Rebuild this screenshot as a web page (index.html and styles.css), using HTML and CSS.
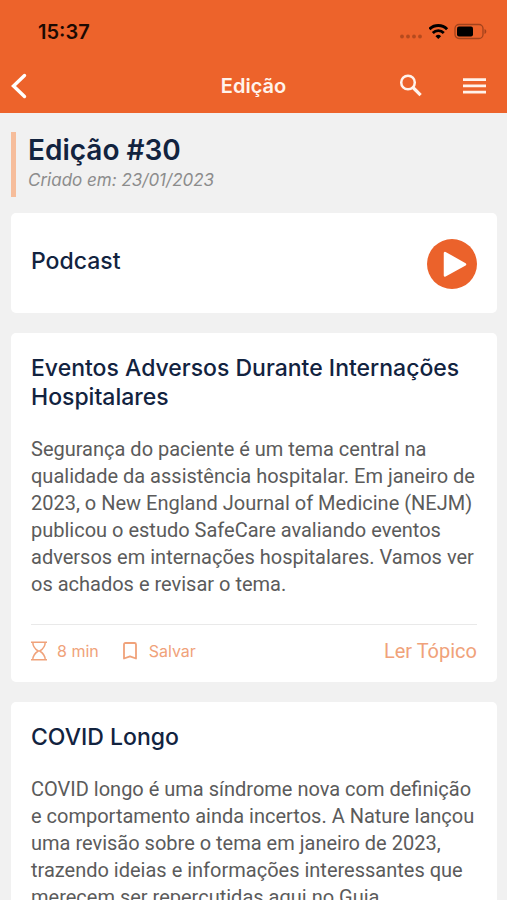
FILE: index.html
```html
<!DOCTYPE html>
<html lang="pt-BR">
<head>
<meta charset="utf-8">
<meta name="viewport" content="width=device-width, initial-scale=1">
<title>Edição</title>
<link rel="stylesheet" href="styles.css">
</head>
<body>
<header class="header">
  <div class="status">
    <span class="time">15:37</span>
    <div class="indicators">
      <svg class="signal" width="24" height="20" viewBox="0 0 24 20" fill="#b54a1e" aria-hidden="true"><circle cx="2" cy="14.500" r="1.900"/><circle cx="8" cy="14.500" r="1.900"/><circle cx="14" cy="14.500" r="1.900"/><circle cx="20" cy="14.500" r="1.900"/></svg>
      <svg width="20" height="20" viewBox="0 0 20 20" fill="none" stroke="#000" aria-hidden="true"><path d="M0.500 7.200a12.600 12.600 0 0 1 17.600 0" stroke-width="3"/><path d="M3.800 10.900a7.900 7.900 0 0 1 11 0" stroke-width="2.800"/><path d="M9.300 17l-2.800-2.800a4 4 0 0 1 5.600 0z" fill="#000" stroke="none"/></svg>
      <svg width="34" height="20" viewBox="0 0 34 20" aria-hidden="true"><rect x="1" y="2.500" width="28" height="14" rx="4" fill="none" stroke="#a3431c" stroke-width="1.300"/><rect x="3" y="4.500" width="16" height="10" rx="2" fill="#000"/><path d="M30.500 7c2.400 1 2.400 4 0 5z" fill="#a3431c"/></svg>
    </div>
  </div>
  <nav class="nav">
    <button class="icon-button" type="button" aria-label="Voltar"><svg width="18" height="28" viewBox="0 0 18 28" fill="none" stroke="#fff" stroke-width="3.400" stroke-linecap="round" stroke-linejoin="miter"><path d="M14.500 3.500L3.500 14l11 10.500"/></svg></button>
    <h1 class="nav-title">Edição</h1>
    <div class="nav-actions">
      <button class="icon-button" type="button" aria-label="Buscar"><svg width="24" height="24" viewBox="0 0 24 24" fill="none" stroke="#fff3ec"><circle cx="9" cy="8.500" r="6.800" stroke-width="2.500"/><path d="M14 13.500l7.600 7.600" stroke-width="3.200"/></svg></button>
      <button class="icon-button" type="button" aria-label="Menu"><svg width="24" height="24" viewBox="0 0 24 24" fill="#fff3ec"><path d="M0 4.200h23v2.700H0zM0 10.500h23v2.700H0zM0 16.800h23v2.700H0z"/></svg></button>
    </div>
  </nav>
</header>
<main class="content">
  <div class="edition">
    <h2 class="edition-title">Edição #30</h2>
    <p class="edition-date">Criado em: 23/01/2023</p>
  </div>
  <section class="card podcast">
    <h3 class="card-title">Podcast</h3>
    <button class="icon-button" type="button" aria-label="Reproduzir"><svg width="50" height="50" viewBox="0 0 50 50"><circle cx="25" cy="25" r="25" fill="#eb622b"/><path d="M18 14v22.500L38 25.300z" fill="#fff" stroke="#fff" stroke-width="2.500" stroke-linejoin="round"/></svg></button>
  </section>
  <article class="card">
    <h3 class="card-title">Eventos Adversos Durante Internações Hospitalares</h3>
    <p class="card-text">Segurança do paciente é um tema central na qualidade da assistência hospitalar. Em janeiro de 2023, o New England Journal of Medicine (NEJM) publicou o estudo SafeCare avaliando eventos adversos em internações hospitalares. Vamos ver os achados e revisar o tema.</p>
    <footer class="card-footer">
      <span class="meta"><svg width="16" height="20" viewBox="0 0 16 20" fill="none" stroke="currentColor" stroke-width="1.500" aria-hidden="true"><path d="M0 1.200h16M0 18.800h16M1.800 1.200c0 4.800 2 6.600 5.400 8.800-3.400 2.200-5.400 4-5.400 8.800M14.200 1.200c0 4.800-2 6.600-5.400 8.800 3.400 2.200 5.400 4 5.400 8.800"/></svg>8 min</span>
      <button class="meta save" type="button"><svg width="14" height="18" viewBox="0 0 14 18" fill="none" stroke="currentColor" stroke-width="1.800" stroke-linejoin="round" aria-hidden="true"><path d="M1 2.500Q1 1 2.500 1h9Q13 1 13 2.500v14L7 14.300l-6 2.200z"/></svg>Salvar</button>
      <a class="read" href="#topico">Ler Tópico</a>
    </footer>
  </article>
  <article class="card">
    <h3 class="card-title">COVID Longo</h3>
    <p class="card-text">COVID longo é uma síndrome nova com definição e comportamento ainda incertos. A Nature lançou uma revisão sobre o tema em janeiro de 2023, trazendo ideias e informações interessantes que merecem ser repercutidas aqui no Guia</p>
  </article>
</main>
</body>
</html>
```
FILE: styles.css
```css
* {
  box-sizing: border-box;
}

body {
  display: flex;
  flex-direction: column;
  height: 100vh;
  margin: 0;
  background: #f1f1f1;
  color: #5b5b5b;
  font-family: Inter, "Liberation Sans", sans-serif;
}

h1, h2, h3, p {
  margin: 0;
}

svg {
  display: block;
  flex-shrink: 0;
}

button {
  padding: 0;
  border: 0;
  background: none;
  color: inherit;
  font: inherit;
  cursor: pointer;
}

.header {
  flex-shrink: 0;
  background: #ed632b;
}

.status {
  display: flex;
  align-items: center;
  justify-content: space-between;
  height: 59px;
  padding: 4px 19px 0 38px;
}

.time {
  color: #1c0a02;
  font-size: 20px;
  font-weight: 600;
}

.indicators {
  display: flex;
  align-items: center;
  gap: 5px;
}

.nav {
  display: grid;
  grid-template-columns: 1fr auto 1fr;
  align-items: center;
  height: 54px;
  padding: 0 10px;
}

.nav .icon-button {
  justify-self: start;
}

.nav-title {
  color: #fff3ec;
  font-size: 20px;
  font-weight: 600;
}

.nav-actions {
  display: flex;
  justify-content: flex-end;
  gap: 40px;
  padding-right: 10px;
}

.content {
  flex: 1;
  min-height: 0;
  padding: 19px 10px 20px 11px;
  overflow-y: auto;
  scrollbar-width: none;
}

.edition {
  height: 65px;
  padding-left: 12px;
  border-left: 5px solid #f6bd9b;
}

.edition-title {
  color: #12233f;
  font-size: 28px;
  font-weight: 600;
  line-height: 36px;
}

.edition-date {
  color: #8c8c8c;
  font-size: 17px;
  font-style: italic;
  line-height: 24px;
}

.card {
  margin-top: 20px;
  padding: 21px 20px 20px;
  border-radius: 5px;
  background: #fff;
}

.podcast {
  display: flex;
  align-items: center;
  justify-content: space-between;
  height: 100px;
  margin-top: 16px;
}

.podcast .card-title {
  padding-bottom: 4px;
}

.card-title {
  color: #12233f;
  font-size: 23px;
  font-weight: 500;
  line-height: 29px;
}

.card-text {
  margin-top: 24px;
  font-family: Roboto, "Liberation Sans", sans-serif;
  font-size: 20px;
  line-height: 27px;
}

.card-footer {
  display: flex;
  align-items: center;
  gap: 24px;
  margin-top: 26px;
  padding-top: 15px;
  border-top: 1px solid #e9e9e9;
  color: #f0a27a;
  line-height: 22px;
}

.meta {
  display: flex;
  align-items: center;
  gap: 10px;
  font-size: 16px;
}

.save {
  gap: 12px;
}

.read {
  margin-left: auto;
  color: inherit;
  font-family: Roboto, "Liberation Sans", sans-serif;
  font-size: 20px;
  text-decoration: none;
}
```
